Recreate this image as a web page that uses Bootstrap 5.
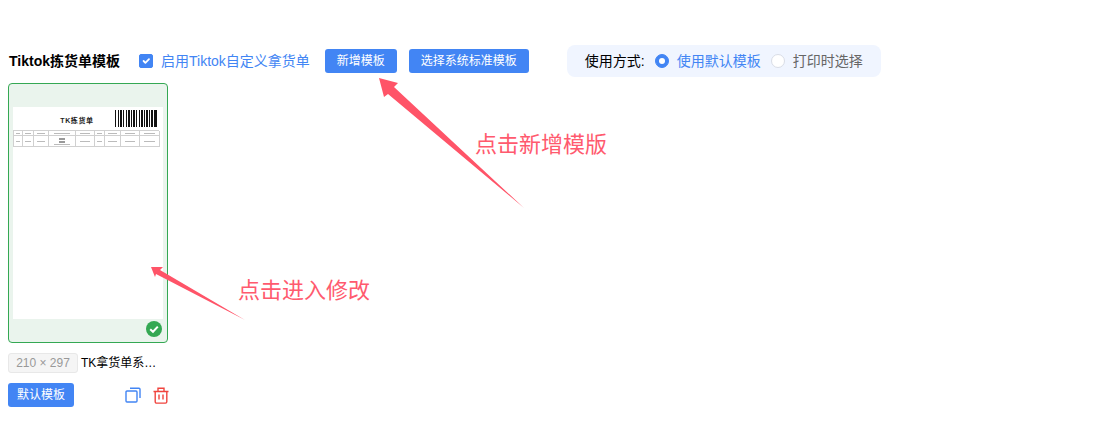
<!DOCTYPE html>
<html lang="zh-CN">

<head>
    <meta charset="UTF-8">
    <meta name="viewport" content="width=device-width, initial-scale=1.0">
    <title>Tiktok拣货单模板</title>
    <link href="https://cdn.jsdelivr.net/npm/bootstrap@5.3.3/dist/css/bootstrap.min.css" rel="stylesheet">
    <style>
        body {
            font-family: "Liberation Sans", "Noto Sans CJK SC", sans-serif;
            font-size: 14px;
            color: #000;
            background: #fff;
        }
        .page-wrap { position: relative; width: 1108px; height: 437px; padding: 45px 0 0 8px; overflow: hidden; }
        .tool-row { height: 32px; }
        .tool-title { width: 131px; padding-left: 1px; font-weight: 700; }
        .tool-check { margin: 0 15px 0 0; padding: 0; min-height: 0; gap: 8px; color: #4285f4; }
        .tool-check .form-check-input { margin: 0; float: none; width: 14px; height: 14px; border-radius: 2px; background-color: #4285f4; border-color: #4285f4; }
        .blue-btn { flex-shrink: 0; height: 24px; padding: 0 12px; font-size: 12px; line-height: 24px; color: #fff; background: #4285f4; border: 0; border-radius: 3px; }
        .blue-btn:hover { color: #fff; background: #4285f4; }
        .tool-second { margin-left: 12px; }
        .mode-panel { width: 314px; height: 32px; margin-left: 38px; padding-left: 18px; background: #f0f5ff; border-radius: 8px; }
        .mode-opt { margin: 0 0 0 10px; padding: 0; min-height: 0; gap: 8px; color: #666; }
        .mode-opt.is-on { color: #4285f4; }
        .mode-opt .form-check-input { margin: 0; float: none; width: 14px; height: 14px; border-color: #d9dde6; }
        .mode-opt .form-check-input:checked { background-color: #4285f4; border-color: #4285f4; }
        .tpl-card { position: relative; width: 160px; height: 260px; margin-top: 6px; padding: 23px 4px; background: #eaf4ed; border: 1px solid #34a853; border-radius: 4px; }
        .tpl-sheet { height: 212px; padding-top: 3px; background: #fff; }
        .sheet-head { height: 20px; padding-right: 6px; }
        .sheet-title { width: 102px; padding: 6px 0 0 26px; font-size: 7px; font-weight: 700; letter-spacing: .6px; text-align: center; color: #222; }
        .sheet-grid { display: grid; grid-template-columns: 9px 11px 15px 27px 19px 10px 16px 19px 20px; width: 146px; border-top: 1px solid #d0d0d0; border-left: 1px solid #d0d0d0; }
        .sheet-grid div { display: flex; flex-direction: column; align-items: center; justify-content: center; gap: 1px; border-right: 1px solid #d0d0d0; border-bottom: 1px solid #d0d0d0; }
        .sheet-grid .is-head { height: 5px; }
        .sheet-grid .is-body { height: 11px; }
        .sheet-grid i { display: block; width: 60%; height: 1px; background: #bbb; }
        .sheet-grid i.short { width: 22%; height: 2px; background: #999; }
        .ok-mark { position: absolute; right: 5px; bottom: 5px; width: 16px; height: 16px; }
        .size-tag { width: 70px; height: 20px; font-size: 12px; line-height: 18px; text-align: center; color: #999; background: #f5f5f5; border: 1px solid #e8e8e8; border-radius: 3px; }
        .tpl-name { margin-left: 3px; font-size: 12px; white-space: nowrap; }
        .meta-row { margin-top: 10px; }
        .action-row { margin-top: 10px; }
        .action-row .blue-btn { padding: 0 9px; }
        .action-icons { margin-left: 51px; gap: 12px; }
        .note-layer { position: absolute; left: 0; top: 0; pointer-events: none; }
        .note-text { position: absolute; font-size: 22px; line-height: 30px; color: #ff5a6e; white-space: nowrap; }
        .note-add { left: 475px; top: 130px; }
        .note-edit { left: 238px; top: 276px; }
    </style>
</head>

<body>
    <div class="page-wrap">
        <div class="tool-row d-flex align-items-center">
            <div class="tool-title">Tiktok拣货单模板</div>
            <label class="form-check tool-check d-flex align-items-center">
                <input class="form-check-input" type="checkbox" checked>
                <span>启用Tiktok自定义拿货单</span>
            </label>
            <button class="btn blue-btn">新增模板</button>
            <button class="btn blue-btn tool-second">选择系统标准模板</button>
            <div class="mode-panel d-flex align-items-center">
                <span>使用方式:</span>
                <label class="form-check mode-opt is-on d-flex align-items-center">
                    <input class="form-check-input" type="radio" name="mode" checked>
                    <span>使用默认模板</span>
                </label>
                <label class="form-check mode-opt d-flex align-items-center">
                    <input class="form-check-input" type="radio" name="mode">
                    <span>打印时选择</span>
                </label>
            </div>
        </div>

        <div class="tpl-card">
            <div class="tpl-sheet">
                <div class="sheet-head d-flex justify-content-between">
                    <div class="sheet-title">TK拣货单</div>
                    <svg width="42" height="17" viewBox="0 0 42 17" stroke="#111">
                        <path stroke-width="1" d="M.5 0v17M3.5 0v17M8.5 0v17M11.5 0v17M16.5 0v17M21.5 0v17M24.5 0v17M29.5 0v17M34.5 0v17M39.5 0v17" />
                        <path stroke-width="2" d="M6 0v17M14 0v17M19 0v17M27 0v17M32 0v17M37 0v17M41 0v17" />
                    </svg>
                </div>
                <div class="sheet-grid" id="sheet-grid"></div>
            </div>
            <svg class="ok-mark" viewBox="0 0 16 16">
                <circle cx="8" cy="8" r="8" fill="#34a853" />
                <path d="M4.2 8.2 7 10.8 11.8 5.6" fill="none" stroke="#fff" stroke-width="2" />
            </svg>
        </div>

        <div class="meta-row d-flex align-items-center">
            <div class="size-tag">210 × 297</div>
            <div class="tpl-name">TK拿货单系…</div>
        </div>

        <div class="action-row d-flex align-items-center">
            <button class="btn blue-btn">默认模板</button>
            <div class="action-icons d-flex align-items-center">
                <svg width="16" height="16" viewBox="0 0 16 16" fill="none" stroke="#4285f4" stroke-width="1.4">
                    <rect x="1" y="4" width="11" height="11" rx="1" />
                    <path d="M5 1.2h9a1 1 0 0 1 1 1V11" />
                </svg>
                <svg width="16" height="17" viewBox="0 0 16 17" fill="none" stroke="#f0443e" stroke-width="1.4">
                    <path d="M.5 4.5h15M5 4.5V1.2h6v3.3M2.2 4.5v10.2a1.4 1.4 0 0 0 1.4 1.4h8.8a1.4 1.4 0 0 0 1.4-1.4V4.5M6 7.5v5M10 7.5v5" />
                </svg>
            </div>
        </div>

        <svg class="note-layer" width="1108" height="437" viewBox="0 0 1108 437">
            <polygon fill="#ff5468" points="379,78 398,83 394,87 524,208 388,94 384,97" />
            <polygon fill="#ff5468" points="151,267 163,267 160,270 245,320 156,274 155,277" />
        </svg>
        <div class="note-text note-add">点击新增模版</div>
        <div class="note-text note-edit">点击进入修改</div>
    </div>

    <script src="https://cdn.jsdelivr.net/npm/bootstrap@5.3.3/dist/js/bootstrap.bundle.min.js"></script>
    <script type="text/javascript">
        // the thumbnail's table is too small to read, cells only get grey marks
        const grid = document.getElementById('sheet-grid');
        let cells = '';
        for (let i = 0; i < 9; i++) {
            cells += '<div class="is-head"><i></i></div>';
        }
        for (let i = 0; i < 9; i++) {
            cells += i === 3
                ? '<div class="is-body"><i class="short"></i><i class="short"></i><i></i></div>'
                : '<div class="is-body"><i></i></div>';
        }
        grid.innerHTML = cells;
    </script>
</body>

</html>
